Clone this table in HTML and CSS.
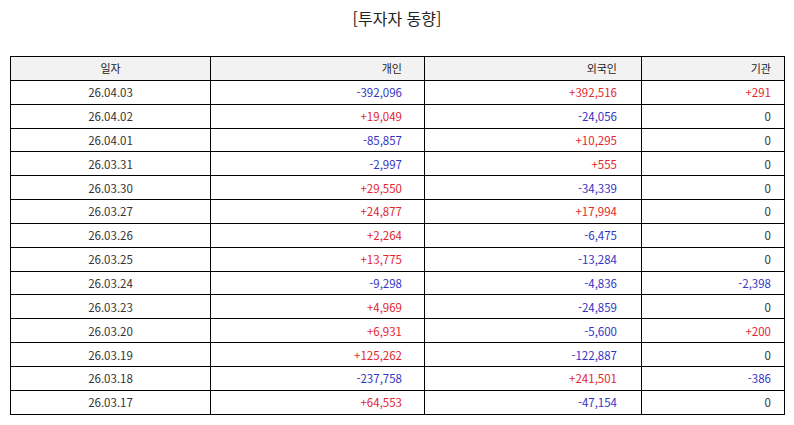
FILE: index.html
```html
<!DOCTYPE html>
<html lang="ko">
<head>
<meta charset="utf-8">
<title>투자자 동향</title>
<link rel="stylesheet" href="styles.css">
</head>
<body>
<h1 class="title">[투자자 동향]</h1>
<table class="flow">
  <colgroup>
    <col class="c-date">
    <col class="c-ind">
    <col class="c-for">
    <col class="c-ins">
  </colgroup>
  <thead>
    <tr><th class="date">일자</th><th class="ind">개인</th><th class="for">외국인</th><th class="ins">기관</th></tr>
  </thead>
  <tbody>
    <tr><td class="date">26.04.03</td><td class="ind dn">-392,096</td><td class="for up">+392,516</td><td class="ins up">+291</td></tr>
    <tr><td class="date">26.04.02</td><td class="ind up">+19,049</td><td class="for dn">-24,056</td><td class="ins">0</td></tr>
    <tr><td class="date">26.04.01</td><td class="ind dn">-85,857</td><td class="for up">+10,295</td><td class="ins">0</td></tr>
    <tr><td class="date">26.03.31</td><td class="ind dn">-2,997</td><td class="for up">+555</td><td class="ins">0</td></tr>
    <tr><td class="date">26.03.30</td><td class="ind up">+29,550</td><td class="for dn">-34,339</td><td class="ins">0</td></tr>
    <tr><td class="date">26.03.27</td><td class="ind up">+24,877</td><td class="for up">+17,994</td><td class="ins">0</td></tr>
    <tr><td class="date">26.03.26</td><td class="ind up">+2,264</td><td class="for dn">-6,475</td><td class="ins">0</td></tr>
    <tr><td class="date">26.03.25</td><td class="ind up">+13,775</td><td class="for dn">-13,284</td><td class="ins">0</td></tr>
    <tr><td class="date">26.03.24</td><td class="ind dn">-9,298</td><td class="for dn">-4,836</td><td class="ins dn">-2,398</td></tr>
    <tr><td class="date">26.03.23</td><td class="ind up">+4,969</td><td class="for dn">-24,859</td><td class="ins">0</td></tr>
    <tr><td class="date">26.03.20</td><td class="ind up">+6,931</td><td class="for dn">-5,600</td><td class="ins up">+200</td></tr>
    <tr><td class="date">26.03.19</td><td class="ind up">+125,262</td><td class="for dn">-122,887</td><td class="ins">0</td></tr>
    <tr><td class="date">26.03.18</td><td class="ind dn">-237,758</td><td class="for up">+241,501</td><td class="ins dn">-386</td></tr>
    <tr><td class="date">26.03.17</td><td class="ind up">+64,553</td><td class="for dn">-47,154</td><td class="ins">0</td></tr>
  </tbody>
</table>
</body>
</html>
```

FILE: styles.css
```css
html, body {
  margin: 0;
  padding: 0;
  background: #ffffff;
}
body {
  padding: 0 10px 0 10px;
  font-family: "Noto Sans CJK KR", "Noto Sans", sans-serif;
  color: #333333;
}
.title {
  margin: 0;
  padding-top: 6px;
  height: 50px;
  box-sizing: border-box;
  text-align: center;
  font-size: 16px;
  font-weight: normal;
  line-height: 24px;
  color: #222222;
}
.flow {
  width: 774px;
  border-collapse: collapse;
  table-layout: fixed;
  font-size: 11.5px;
  margin-top: 6px;
}
.c-date { width: 200px; }
.c-ind { width: 214px; }
.c-for { width: 217px; }
.c-ins { width: 143px; }
.flow tr { height: 23.85px; }
.flow th, .flow td {
  border: 1px solid #000000;
  padding: 0;
  font-weight: normal;
  line-height: 14px;
  white-space: nowrap;
}
.flow th {
  background: #f2f2f2;
  color: #222222;
  font-size: 11px;
}
.flow .date { text-align: center; }
.flow .ind { text-align: right; padding-right: 22px; }
.flow .for { text-align: right; padding-right: 24px; }
.flow .ins { text-align: right; padding-right: 13px; }
.flow td { color: #333333; }
.flow td.up { color: #e3262e; }
.flow td.dn { color: #3434c4; }
```
